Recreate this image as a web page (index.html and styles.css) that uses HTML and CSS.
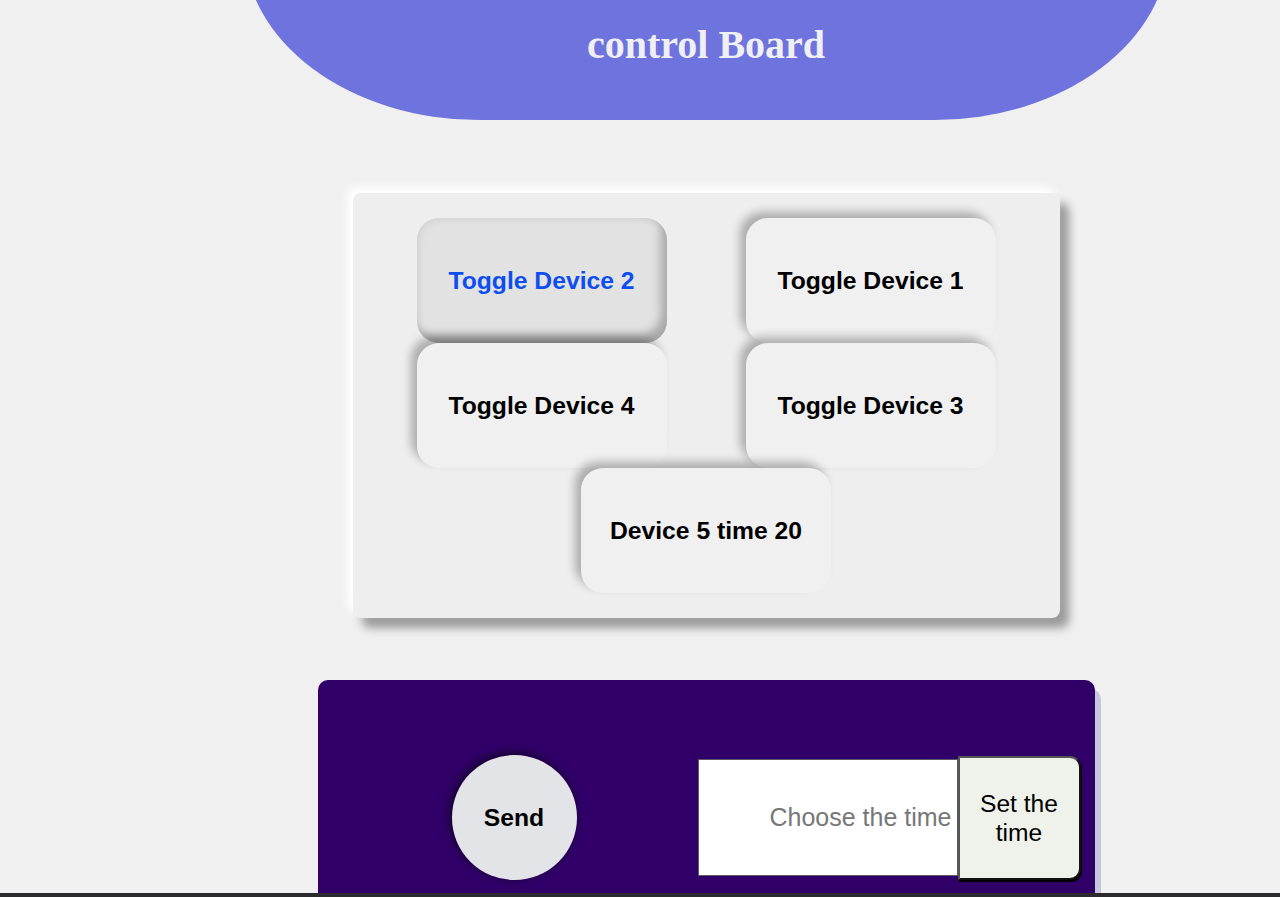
FILE: index.html
```html
<!DOCTYPE html>
<html lang="en">
<head>
<meta charset="utf-8">
<title>control Board</title>
<link rel="stylesheet" href="styles.css">
</head>
<body>
<div class="page">
  <header class="header">
    <h1 class="title">control Board</h1>
  </header>
  <section class="card">
    <button class="toggle active">Toggle Device 2</button>
    <button class="toggle">Toggle Device 1</button>
    <button class="toggle">Toggle Device 4</button>
    <button class="toggle">Toggle Device 3</button>
    <button class="toggle">Device 5 time 20</button>
  </section>
  <section class="panel">
    <button class="send">Send</button>
    <div class="timer">
      <input class="time-input" type="text" placeholder="Choose the time">
      <button class="set-btn">Set the time</button>
    </div>
  </section>
</div>
<div class="bottom-bar"></div>
</body>
</html>
```
FILE: styles.css
```css
html, body {
  margin: 0;
  padding: 0;
  background: #f0f0f0;
  overflow: hidden;
  height: 897px;
}
body {
  font-family: "Liberation Sans", Arial, sans-serif;
}
.page {
  width: 1146px;
  margin-left: 133px;
  display: flex;
  flex-direction: column;
  align-items: center;
}
.header {
  width: 925px;
  height: 200px;
  margin-top: -80px;
  background: #6e73dd;
  border-radius: 0 0 235px 235px / 0 0 175px 175px;
  display: flex;
  justify-content: center;
  box-sizing: border-box;
  padding-top: 100px;
}
.title {
  margin: 0;
  font-family: "Liberation Serif", "Times New Roman", serif;
  font-weight: bold;
  font-size: 40px;
  line-height: 50px;
  color: #f0f0f4;
}
.card {
  margin-top: 73px;
  width: 707px;
  height: 425px;
  box-sizing: border-box;
  padding: 25px 24.5px;
  background: #eeeeee;
  border-radius: 8px;
  box-shadow: -6px -6px 10px #ffffff, 9px 10px 10px #9a9a9a;
  display: flex;
  flex-wrap: wrap;
  justify-content: center;
  align-content: flex-start;
}
.toggle {
  width: 250px;
  height: 125px;
  margin: 0 39.5px;
  border: none;
  border-radius: 22px;
  background: #f0f0f0;
  font-family: "Liberation Sans", Arial, sans-serif;
  font-weight: bold;
  font-size: 24.7px;
  color: #000;
  box-shadow: -6px -6px 10px rgba(0, 0, 0, 0.28);
  padding: 0;
}
.toggle.active {
  background: #e2e2e2;
  color: #0d4ef0;
  box-shadow: inset -6px -8px 10px #a8a8a8, inset 3px 3px 6px #d6d6d6;
}
.panel {
  margin-top: 62px;
  width: 777px;
  height: 280px;
  box-sizing: border-box;
  padding: 75px 0 0 134px;
  background: #300068;
  border-radius: 10px;
  box-shadow: 6px 9px 0 #c6c7dc;
  display: flex;
  align-items: flex-start;
}
.send {
  width: 125px;
  height: 125px;
  border-radius: 50%;
  border: none;
  background: #e3e4e8;
  font-family: "Liberation Sans", Arial, sans-serif;
  font-weight: bold;
  font-size: 24.7px;
  color: #000;
  box-shadow: -2px -2px 10px rgba(0, 0, 0, 0.6);
  padding: 0;
}
.timer {
  margin-left: 121px;
  display: flex;
  align-items: center;
  height: 125px;
}
.time-input {
  width: 260px;
  height: 117px;
  box-sizing: border-box;
  border: 1px solid #5a5a6a;
  background: #fff;
  text-align: right;
  padding: 0 5px 0 0;
  font-family: "Liberation Sans", Arial, sans-serif;
  font-size: 25px;
  color: #222;
  outline: none;
}
.time-input::placeholder {
  color: #777777;
}
.set-btn {
  width: 123px;
  height: 124px;
  box-sizing: border-box;
  border: 2px solid #555;
  border-right-color: #111;
  border-bottom-color: #111;
  border-radius: 0 11px 11px 0;
  background: #eff1eb;
  font-family: "Liberation Sans", Arial, sans-serif;
  font-size: 24.6px;
  line-height: 29px;
  color: #000;
  padding: 0 10px;
  box-shadow: 1px 2px 0 #000;
}
.bottom-bar {
  position: fixed;
  left: 0;
  right: 0;
  bottom: 0;
  height: 4px;
  background: #2b2a2e;
}
```
